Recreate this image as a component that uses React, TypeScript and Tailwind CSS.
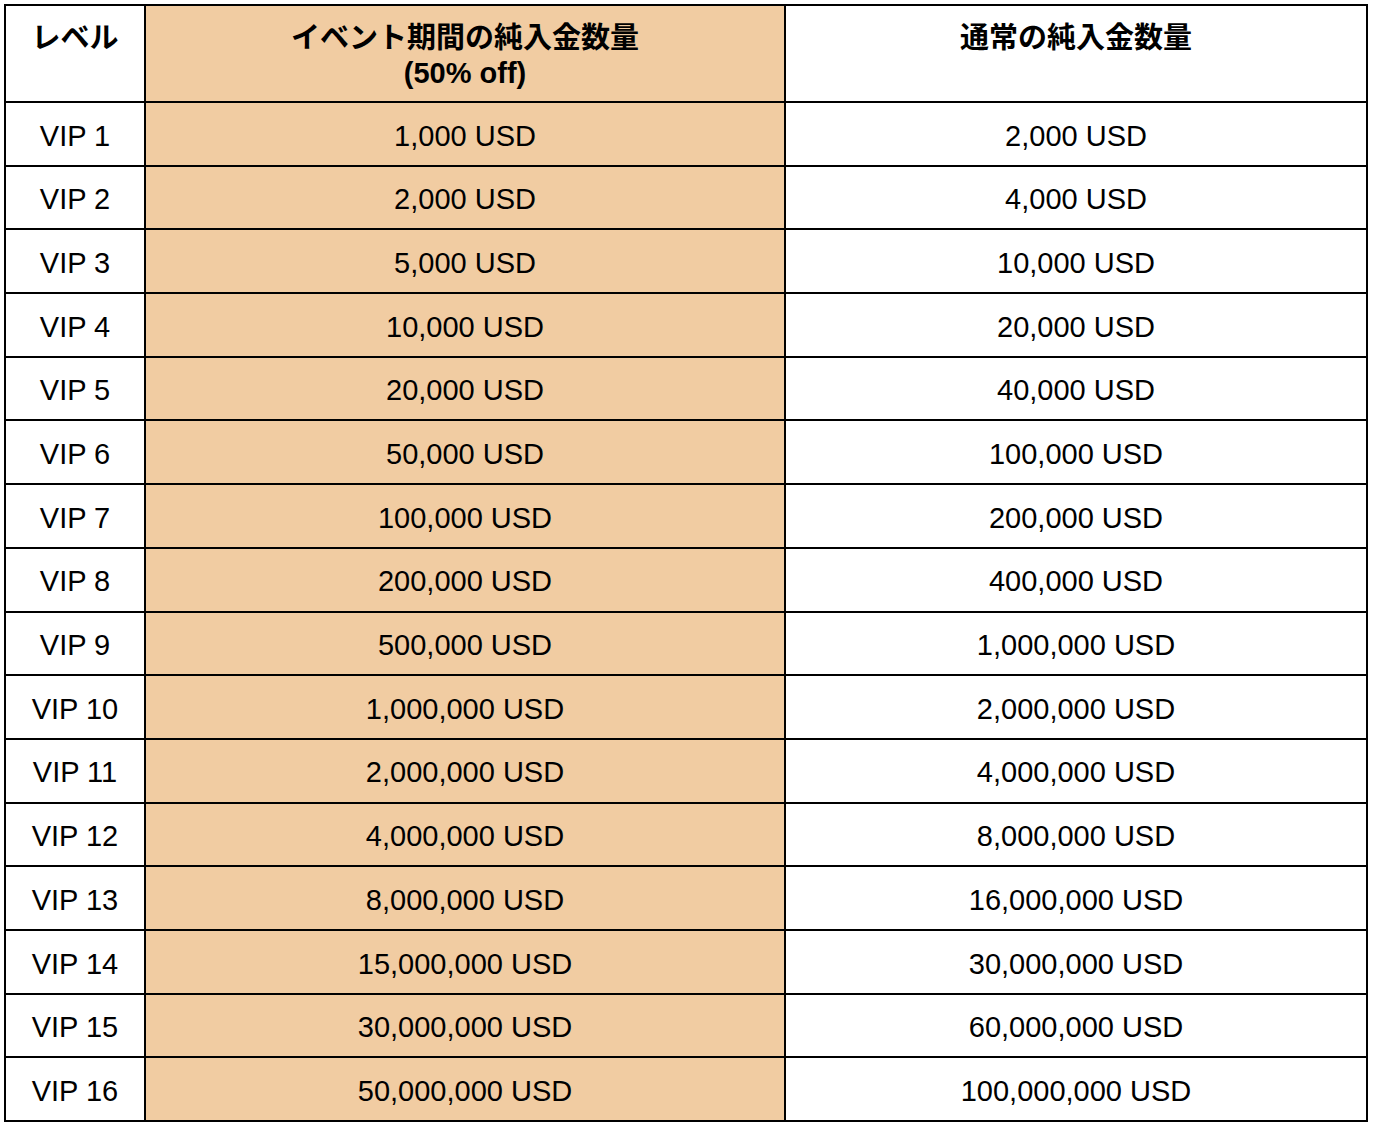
import React from "react";

const rows: [string, string, string][] = [
  ["VIP 1", "1,000 USD", "2,000 USD"],
  ["VIP 2", "2,000 USD", "4,000 USD"],
  ["VIP 3", "5,000 USD", "10,000 USD"],
  ["VIP 4", "10,000 USD", "20,000 USD"],
  ["VIP 5", "20,000 USD", "40,000 USD"],
  ["VIP 6", "50,000 USD", "100,000 USD"],
  ["VIP 7", "100,000 USD", "200,000 USD"],
  ["VIP 8", "200,000 USD", "400,000 USD"],
  ["VIP 9", "500,000 USD", "1,000,000 USD"],
  ["VIP 10", "1,000,000 USD", "2,000,000 USD"],
  ["VIP 11", "2,000,000 USD", "4,000,000 USD"],
  ["VIP 12", "4,000,000 USD", "8,000,000 USD"],
  ["VIP 13", "8,000,000 USD", "16,000,000 USD"],
  ["VIP 14", "15,000,000 USD", "30,000,000 USD"],
  ["VIP 15", "30,000,000 USD", "60,000,000 USD"],
  ["VIP 16", "50,000,000 USD", "100,000,000 USD"],
];

export default function App() {
  return (
    <div
      className="min-h-[1130px] w-[1374px] bg-white pt-[4px] pl-[4px] text-black"
      style={{ fontFamily: '"Liberation Sans", Arial, "Noto Sans CJK JP", sans-serif' }}
    >
      <div className="w-[1364px] border-t-2 border-l-2 border-black">
        <div className="grid grid-cols-[140px_640px_582px] h-[97px] font-bold text-[29px] leading-[35px]">
          <div className="border-r-2 border-b-2 border-black text-center pt-[15px]">レベル</div>
          <div className="border-r-2 border-b-2 border-black text-center pt-[15px] bg-[#f1cca2]">
            イベント期間の純入金数量
            <br />
            (50% off)
          </div>
          <div className="border-r-2 border-b-2 border-black text-center pt-[15px]">通常の純入金数量</div>
        </div>
        {rows.map((r) => (
          <div key={r[0]} className="grid grid-cols-[140px_640px_582px] h-[63.6875px] text-[29px]">
            <div className="border-r-2 border-b-2 border-black flex items-center justify-center pt-[5px]">{r[0]}</div>
            <div className="border-r-2 border-b-2 border-black flex items-center justify-center pt-[5px] bg-[#f1cca2]">{r[1]}</div>
            <div className="border-r-2 border-b-2 border-black flex items-center justify-center pt-[5px]">{r[2]}</div>
          </div>
        ))}
      </div>
    </div>
  );
}
